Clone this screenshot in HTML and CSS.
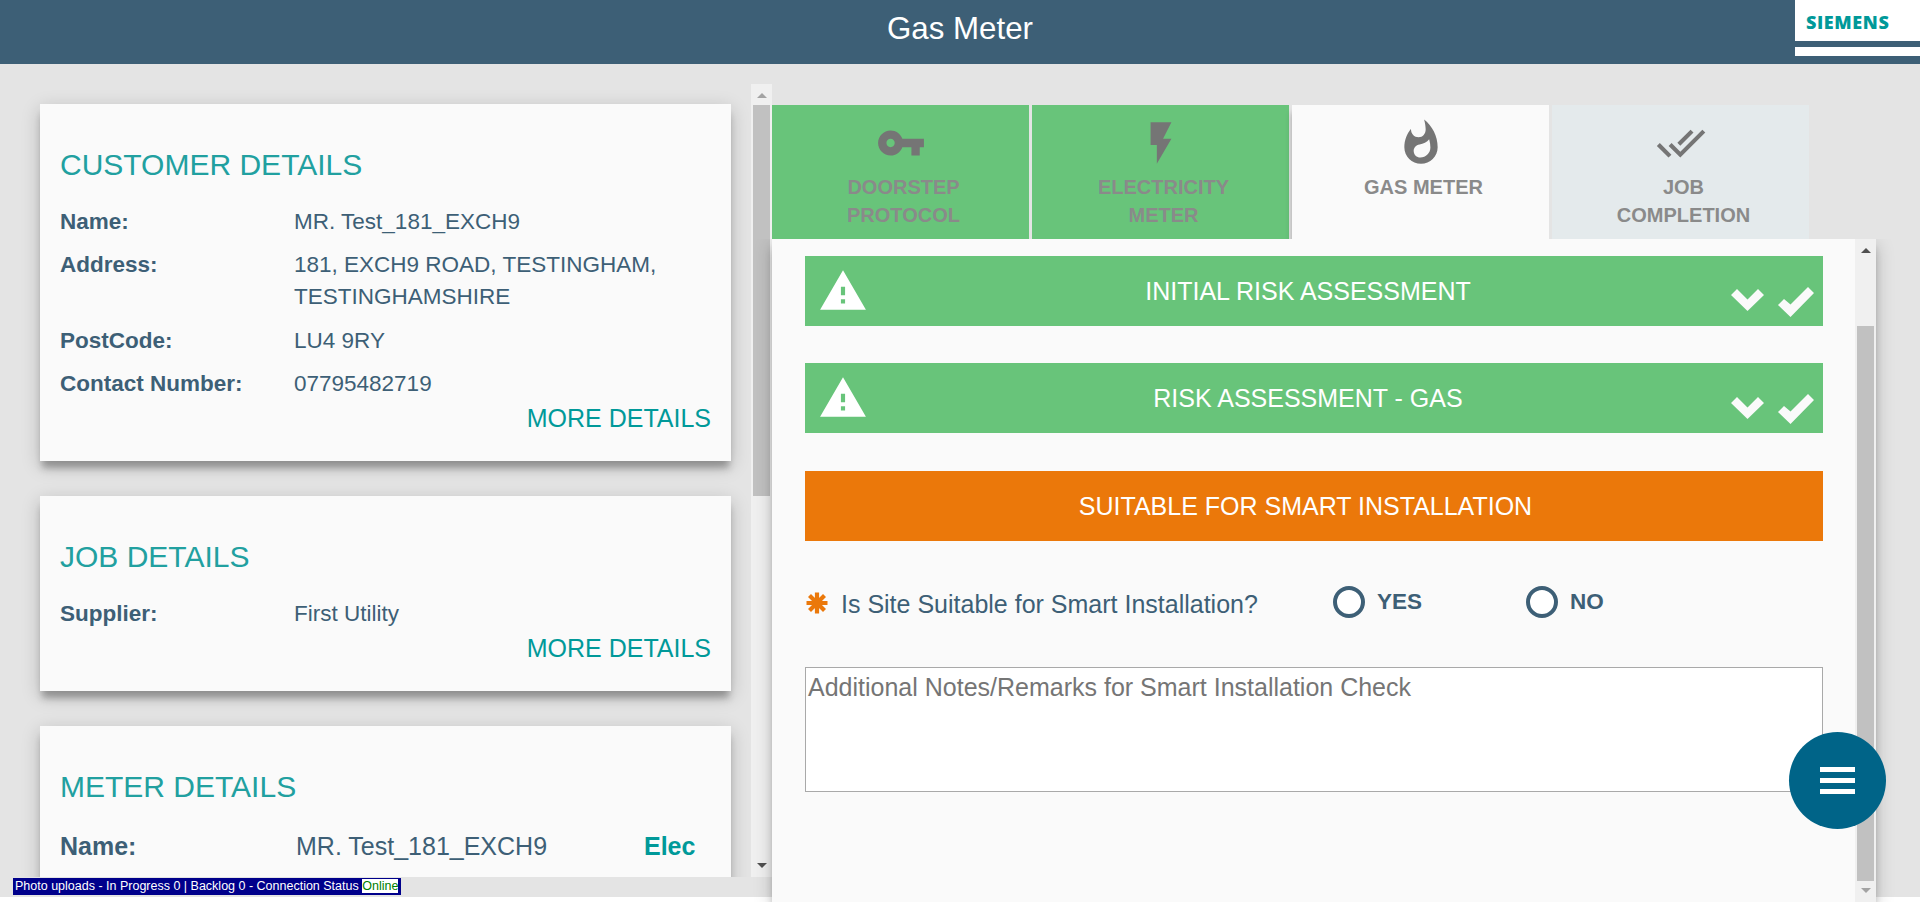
FILE: index.html
```html
<!DOCTYPE html>
<html lang="en">
<head>
<meta charset="utf-8">
<title>Gas Meter</title>
<link rel="stylesheet" href="styles.css">
</head>
<body>
<svg class="defs" width="0" height="0">
  <symbol id="warn" viewBox="0 0 24 24"><path d="M1 21h22L12 2 1 21zm12-3h-2v-2h2v2zm0-4h-2v-4h2v4z"/></symbol>
  <symbol id="chev" viewBox="0 0 33 22"><path d="M6 0 16.500 10.500 27 0 33 6 16.500 22 0 6z"/></symbol>
  <symbol id="tick" viewBox="0 0 36 30"><path d="M30 0 36 6 12.500 30 0 18 6 12 12.500 17.500z"/></symbol>
</svg>
<header class="top">
  <h1>Gas Meter</h1>
  <div class="logo"><div class="logo-name">SIEMENS</div><div class="logo-stripe"></div></div>
</header>
<main class="content">
  <section class="side">
    <div class="cards">
      <article class="card customer">
        <h2>CUSTOMER DETAILS</h2>
        <dl>
          <dt>Name:</dt><dd>MR. Test_181_EXCH9</dd>
          <dt>Address:</dt><dd>181, EXCH9 ROAD, TESTINGHAM,<br>TESTINGHAMSHIRE</dd>
          <dt>PostCode:</dt><dd>LU4 9RY</dd>
          <dt>Contact Number:</dt><dd>07795482719</dd>
        </dl>
        <a class="more">MORE DETAILS</a>
      </article>
      <article class="card job">
        <h2>JOB DETAILS</h2>
        <dl><dt>Supplier:</dt><dd>First Utility</dd></dl>
        <a class="more">MORE DETAILS</a>
      </article>
      <article class="card meter">
        <h2>METER DETAILS</h2>
        <div class="meter-row"><b>Name:</b><span>MR. Test_181_EXCH9</span><b class="elec">Elec</b></div>
      </article>
    </div>
    <div class="scroll side-scroll"><i class="up dim"></i><i class="thumb"></i><i class="down"></i></div>
  </section>
  <section class="work">
    <nav class="tabs">
      <div class="tab done"><svg viewBox="0 0 24 24"><path d="M12.650 10C11.830 7.670 9.610 6 7 6c-3.310 0-6 2.690-6 6s2.690 6 6 6c2.610 0 4.830-1.670 5.650-4H17v4h4v-4h2v-4H12.650zM7 14c-1.100 0-2-.9-2-2s.9-2 2-2 2 .9 2 2-.9 2-2 2z"/></svg><span>DOORSTEP<br>PROTOCOL</span></div>
      <div class="tab done"><svg viewBox="0 0 24 24"><path d="M7 2v11h3v9l7-12h-4l4-8z"/></svg><span>ELECTRICITY<br>METER</span></div>
      <div class="tab active"><svg viewBox="0 0 24 24"><path d="M13.500.67s.74 2.650.74 4.800c0 2.060-1.350 3.730-3.410 3.730-2.070 0-3.630-1.670-3.630-3.730l.03-.36C5.210 7.510 4 10.620 4 14c0 4.420 3.580 8 8 8s8-3.580 8-8C20 8.610 17.410 3.800 13.500.67zM11.710 19c-1.780 0-3.220-1.400-3.220-3.140 0-1.620 1.050-2.760 2.810-3.120 1.770-.36 3.600-1.210 4.620-2.580.39 1.290.59 2.650.59 4.040 0 2.650-2.150 4.800-4.800 4.800z"/></svg><span>GAS METER</span></div>
      <div class="tab todo"><svg viewBox="0 0 24 24"><path d="M18 7l-1.410-1.410-6.340 6.340 1.410 1.410L18 7zm4.240-1.410L11.660 16.170 7.480 12l-1.410 1.410L11.660 19l12-12-1.420-1.410zM.41 13.410L6 19l1.410-1.410L1.830 12 .41 13.410z"/></svg><span>JOB<br>COMPLETION</span></div>
    </nav>
    <div class="panel">
      <div class="form">
        <div class="bar ok"><svg class="warn"><use href="#warn"/></svg><span>INITIAL RISK ASSESSMENT</span><svg class="chev"><use href="#chev"/></svg><svg class="tick"><use href="#tick"/></svg></div>
        <div class="bar ok"><svg class="warn"><use href="#warn"/></svg><span>RISK ASSESSMENT - GAS</span><svg class="chev"><use href="#chev"/></svg><svg class="tick"><use href="#tick"/></svg></div>
        <div class="bar current"><span>SUITABLE FOR SMART INSTALLATION</span></div>
        <div class="question">
          <svg class="star" viewBox="0 0 22 22"><path d="M11 .5v21M.5 11h21M3.500 3.500l15 15M18.500 3.500l-15 15"/></svg>
          <span class="ask">Is Site Suitable for Smart Installation?</span>
          <label class="yes"><i></i>YES</label>
          <label class="no"><i></i>NO</label>
        </div>
        <textarea class="notes" placeholder="Additional Notes/Remarks for Smart Installation Check"></textarea>
      </div>
      <div class="scroll"><i class="up"></i><i class="thumb"></i><i class="down dim"></i></div>
    </div>
  </section>
</main>
<div class="status">Photo uploads - In Progress 0 | Backlog 0 - Connection Status <span>Online</span></div>
<div class="fab"><i></i><i></i><i></i></div>
</body>
</html>
```
FILE: styles.css
```css
* { box-sizing: border-box; }
body { margin: 0; height: 902px; overflow: hidden; background: #fff; color: #3d5f76; font-family: "Liberation Sans", Arial, sans-serif; }
.defs { position: absolute; }
h1, h2, dl, dd { margin: 0; font-weight: 400; }

.top { display: flex; justify-content: center; height: 64px; background: #3d5f76; }
.top h1 { color: #fff; font-size: 31.250px; line-height: 58px; }
.logo { position: absolute; top: 0; right: 0; width: 125px; height: 56px; background: #fff; }
.logo-name { height: 41px; padding: 10px 0 0 11px; color: #009999; font: 800 18px/25px "Open Sans", sans-serif; letter-spacing: .6px; }
.logo-stripe { height: 6px; background: #3d5f76; }

.content { display: flex; height: 833px; background: #e4e4e4; }
.side { display: flex; width: 772px; height: 793px; margin-top: 20px; }
.cards { display: flex; flex-direction: column; gap: 35px; width: 751px; padding: 20px 20px 0 40px; overflow: hidden; }
.card { flex: none; padding: 41px 20px 0; background: #fafafa; box-shadow: 0 9px 7px -2px rgba(0,0,0,.27), 0 5px 18px rgba(0,0,0,.2); }
.customer { height: 357px; }
.job { height: 195px; }
.meter { height: 300px; }
.card h2 { height: 40px; margin-bottom: 21px; color: #21a0a0; font-size: 30px; line-height: 40px; }
dl { display: grid; grid-template-columns: 234px 1fr; row-gap: 11.300px; font-size: 22.500px; line-height: 32px; }
dt, b { font-weight: 700; }
.more { display: block; color: #009999; font-size: 25px; line-height: 36px; text-align: right; }
.meter-row { display: flex; font-size: 25px; line-height: 36px; }
.meter-row b:first-child { width: 236px; }
.meter-row span { width: 348px; }
.elec { color: #009999; }

.scroll { display: flex; flex-direction: column; flex: none; align-items: center; width: 21px; background: #f0f0f0; }
.up, .down { border: 5px solid transparent; border-top: 0; border-bottom: 5px solid #505050; }
.up { margin: 9px 0 7px; }
.down { margin: auto 0 9px; border-top: 5px solid #505050; border-bottom: 0; }
.up.dim { border-bottom-color: #a3a3a3; }
.down.dim { border-top-color: #a3a3a3; }
.thumb { width: 17px; height: 391px; background: #c1c1c1; }

.work { width: 1104px; padding-top: 41px; }
.tabs { display: flex; gap: 3px; height: 134px; }
.tab { display: flex; flex-direction: column; align-items: center; width: 257px; padding-top: 13px; color: #8a8a8a; font-size: 20px; font-weight: 700; line-height: 28px; text-align: center; }
.tab svg { width: 50px; height: 50px; fill: #757575; }
.tab span { margin-top: 5px; padding-left: 6px; }
.done { background: #68c47a; }
.active { background: #fafafa; box-shadow: 0 8px 6px rgba(0,0,0,.3); clip-path: inset(0 0 0 -8px); }
.todo { background: #e4eaec; }

.panel { position: relative; display: flex; height: 663px; background: #fafafa; box-shadow: 0 8px 8px -2px rgba(0,0,0,.27), 0 5px 18px rgba(0,0,0,.2); clip-path: inset(0 -40px 0 -40px); }
.panel .thumb { height: 555px; margin-top: 66px; }
.form { flex: 1; padding: 17px 32px 0 33px; }
.bar { display: flex; align-items: center; height: 70px; margin-bottom: 37px; color: #fff; font-size: 25px; }
.bar span { flex: 1; text-align: center; }
.ok span { padding-left: 18px; padding-right: 1px; }
.ok { background: #68c47a; }
.ok + .ok { margin-bottom: 38px; }
.current { background: #eb780a; }
.current span { padding-right: 17px; }
.bar svg { flex: none; fill: #fafafa; }
.bar .warn { fill: #fff; }
.warn { width: 50px; height: 50px; margin-left: 13px; }
.chev { width: 33px; height: 22px; margin: 18px 14px 0 0; }
.tick { width: 36px; height: 30px; margin: 21px 9px 0 0; }
.ok + .ok .chev { margin-top: 20px; }
.question { display: flex; align-items: center; height: 50px; font-size: 25px; }
.star { width: 22px; height: 22px; margin-left: 1px; stroke: #eb780a; stroke-width: 4.200; }
.ask { width: 492px; margin-left: 13px; padding-top: 2px; }
.question label { display: flex; align-items: center; gap: 12px; width: 193px; margin-top: -2px; font-size: 22.500px; font-weight: 700; }
.question i { width: 32px; height: 32px; border: 4px solid #3d5f76; border-radius: 50%; background: #fff; }
.notes { display: block; width: 1018px; height: 125px; margin-top: 39px; padding: 2px; border: 1px solid #a9a9a9; border-radius: 0; resize: none; font: 25px/34px "Liberation Sans", Arial, sans-serif; }
.notes::placeholder { color: #757575; }

.status { position: absolute; left: 13px; top: 878px; width: 388px; height: 17px; padding: 1px 2px; background: #00008b; color: #fff; font-size: 12.500px; line-height: 14px; white-space: nowrap; }
.status span { display: inline-block; background: #fff; color: #008000; }
.fab { position: absolute; left: 1789px; top: 732px; display: flex; flex-direction: column; align-items: center; justify-content: center; gap: 6px; width: 97px; height: 97px; border-radius: 50%; background: #006488; }
.fab i { width: 35px; height: 5px; background: #fff; }
```
